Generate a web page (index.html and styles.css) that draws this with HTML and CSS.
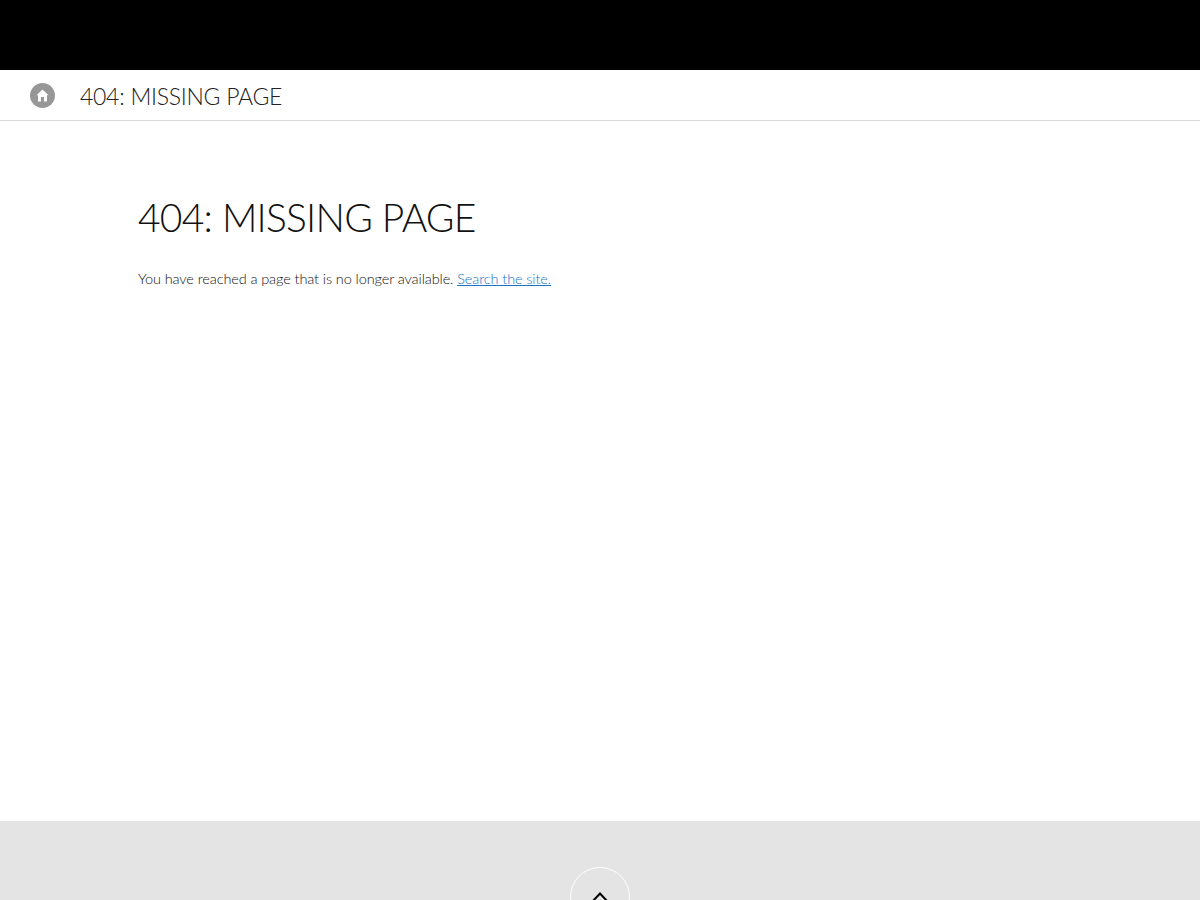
FILE: index.html
```html
<!DOCTYPE html>
<html lang="en">
<head>
<meta charset="utf-8">
<title>404: Missing Page</title>
<link rel="stylesheet" href="styles.css">
</head>
<body>
<div class="page">
  <div class="topbar"></div>
  <header class="crumbbar">
    <a class="home" href="#" aria-label="Home">
      <svg viewBox="0 0 25 25" width="25" height="25">
        <circle cx="12.5" cy="12.5" r="12.5" fill="#979797"/>
        <path d="M12.5 6.5 L18.6 12.3 H17 V18.4 H14 V14 H11 V18.4 H8 V12.3 H6.4 Z" fill="#fff"/>
      </svg>
    </a>
    <span class="crumbtitle">404: MISSING PAGE</span>
  </header>
  <main class="content">
    <h1 class="title">404: MISSING PAGE</h1>
    <p class="message">You have reached a page that is no longer available. <a class="link" href="#">Search the site.</a></p>
  </main>
  <footer class="footer">
    <a class="totop" href="#" aria-label="Back to top">
      <svg viewBox="0 0 20 12" width="20" height="12">
        <path d="M2 11 L10 2.5 L18 11" fill="none" stroke="#000" stroke-width="2"/>
      </svg>
    </a>
  </footer>
</div>
</body>
</html>
```
FILE: styles.css
```css
html, body {
  margin: 0;
  padding: 0;
  background: #fff;
}
.page {
  height: 900px;
  overflow: hidden;
  display: flex;
  flex-direction: column;
  font-family: Lato, "Liberation Sans", sans-serif;
  font-weight: 300;
}
.topbar {
  height: 70px;
  background: #000;
  flex: none;
}
.crumbbar {
  height: 50px;
  flex: none;
  display: flex;
  align-items: center;
  padding-left: 30px;
  border-bottom: 1px solid #d9d9d9;
}
.home {
  display: flex;
  width: 25px;
  height: 25px;
  margin-right: 25px;
}
.crumbtitle {
  font-size: 23px;
  letter-spacing: -0.28px;
  color: #222;
  line-height: 26px;
  padding-top: 2px;
}
.content {
  height: 700px;
  flex: none;
  box-sizing: border-box;
  padding: 69px 0 0 138px;
}
.title {
  margin: 0;
  font-size: 39px;
  font-weight: 300;
  letter-spacing: -0.78px;
  line-height: 54px;
  color: #111;
}
.message {
  margin: 23px 0 0;
  font-size: 14.5px;
  letter-spacing: -0.1px;
  line-height: 24px;
  color: #111;
}
.link {
  color: #1a73c4;
  text-decoration: underline;
}
.footer {
  flex: 1;
  background: #e4e4e4;
  display: flex;
  justify-content: center;
  padding-top: 46px;
}
.totop {
  box-sizing: border-box;
  width: 60px;
  height: 60px;
  border: 1px solid #fff;
  border-radius: 50%;
  display: flex;
  justify-content: center;
  align-items: flex-start;
  padding-top: 23px;
  flex: none;
}
```
